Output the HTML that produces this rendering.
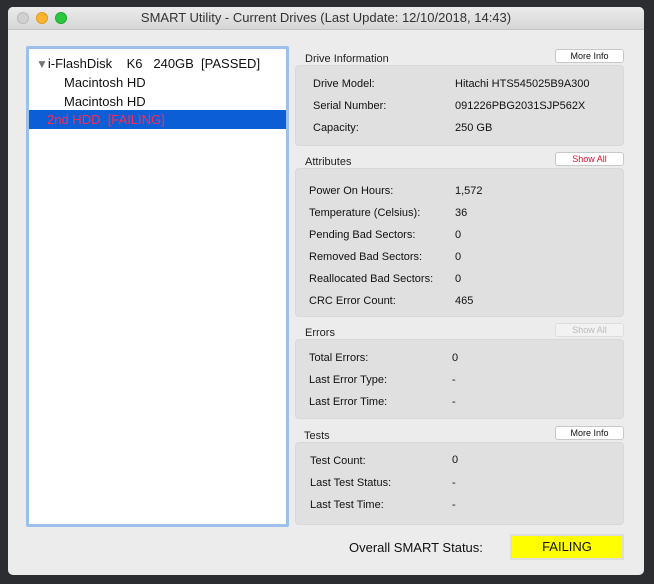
<!DOCTYPE html>
<html><head><style>
*{margin:0;padding:0;box-sizing:border-box}
body{width:654px;height:584px;background:#2b2d30;font-family:"Liberation Sans",sans-serif;position:relative;overflow:hidden}
.win{position:absolute;left:8px;top:7px;width:636px;height:568px;background:#ececec;border-radius:5px;overflow:hidden}
.tb{height:23px;background:linear-gradient(#ebebeb,#d6d6d6);border-bottom:1px solid #c4c4c4;text-align:center;font-size:13px;line-height:22px;color:#333}
.dot{position:absolute;top:5px;width:12px;height:12px;border-radius:50%}
.a{position:absolute}
.lp{position:absolute;left:18px;top:39px;width:263px;height:481px;border:3px solid #9cc0ec;background:#fff;border-radius:2px}
.row{position:absolute;left:0;width:257px;height:19px;font-size:13px;line-height:19px;color:#111;white-space:pre}
.box{position:absolute;left:287px;width:329px;background:#e0e0e0;border:1px solid #d8d8d8;border-radius:4px}
.lbl{position:absolute;font-size:11px;color:#222}
.btn{position:absolute;left:547px;width:69px;height:14px;background:#fff;border:1px solid #c8c8c8;border-radius:3px;font-size:9px;text-align:center;line-height:12px;color:#111}
.k,.v{position:absolute;font-size:11px;color:#111}
</style></head><body>
<div class="win">
<div class="tb">SMART Utility - Current Drives (Last Update: 12/10/2018, 14:43)</div>
<div class="dot" style="left:9px;background:#d0d0d0;border:1px solid #bbb"></div>
<div class="dot" style="left:28px;background:#fdb52d;border:1px solid #de9c22"></div>
<div class="dot" style="left:47px;background:#2bc83f;border:1px solid #1fa830"></div>
<div class="lp">
<div class="row" style="top:5px;left:7px"><span style="color:#777;font-size:12px">▼</span>i-FlashDisk    K6   240GB  [PASSED]</div>
<div class="row" style="top:24px;left:35px">Macintosh HD</div>
<div class="row" style="top:43px;left:35px">Macintosh HD</div>
<div class="row" style="top:61px;background:#0b5ed5;color:#ff2a55;padding-left:18px">2nd HDD  [FAILING]</div>
</div>

<div class="lbl" style="left:297px;top:46px">Drive Information</div>
<div class="btn" style="top:42px">More Info</div>
<div class="box" style="top:58px;height:81px"></div>
<div class="k" style="left:305px;top:71px">Drive Model:</div><div class="v" style="left:447px;top:71px">Hitachi HTS545025B9A300</div>
<div class="k" style="left:305px;top:93px">Serial Number:</div><div class="v" style="left:447px;top:93px">091226PBG2031SJP562X</div>
<div class="k" style="left:305px;top:115px">Capacity:</div><div class="v" style="left:447px;top:115px">250 GB</div>

<div class="lbl" style="left:297px;top:149px">Attributes</div>
<div class="btn" style="top:145px;color:#e0102a">Show All</div>
<div class="box" style="top:161px;height:149px"></div>
<div class="k" style="left:301px;top:178px">Power On Hours:</div><div class="v" style="left:447px;top:178px">1,572</div>
<div class="k" style="left:301px;top:200px">Temperature (Celsius):</div><div class="v" style="left:447px;top:200px">36</div>
<div class="k" style="left:301px;top:222px">Pending Bad Sectors:</div><div class="v" style="left:447px;top:222px">0</div>
<div class="k" style="left:301px;top:244px">Removed Bad Sectors:</div><div class="v" style="left:447px;top:244px">0</div>
<div class="k" style="left:301px;top:266px">Reallocated Bad Sectors:</div><div class="v" style="left:447px;top:266px">0</div>
<div class="k" style="left:301px;top:288px">CRC Error Count:</div><div class="v" style="left:447px;top:288px">465</div>

<div class="lbl" style="left:297px;top:320px">Errors</div>
<div class="btn" style="top:316px;color:#bbb;background:#f2f2f2;border-color:#ddd">Show All</div>
<div class="box" style="top:332px;height:80px"></div>
<div class="k" style="left:301px;top:345px">Total Errors:</div><div class="v" style="left:444px;top:345px">0</div>
<div class="k" style="left:301px;top:367px">Last Error Type:</div><div class="v" style="left:444px;top:367px">-</div>
<div class="k" style="left:301px;top:389px">Last Error Time:</div><div class="v" style="left:444px;top:389px">-</div>

<div class="lbl" style="left:296px;top:423px">Tests</div>
<div class="btn" style="top:419px">More Info</div>
<div class="box" style="top:435px;height:83px"></div>
<div class="k" style="left:302px;top:448px">Test Count:</div><div class="v" style="left:444px;top:447px">0</div>
<div class="k" style="left:302px;top:470px">Last Test Status:</div><div class="v" style="left:444px;top:470px">-</div>
<div class="k" style="left:302px;top:492px">Last Test Time:</div><div class="v" style="left:444px;top:492px">-</div>

<div class="a" style="left:341px;top:533px;font-size:13px;color:#111">Overall SMART Status:</div>
<div class="a" style="left:502px;top:527px;width:114px;height:26px;background:#ffff00;border:2px solid #ddd;font-size:13px;text-align:center;line-height:22px;color:#111">FAILING</div>
</div>
</body></html>
